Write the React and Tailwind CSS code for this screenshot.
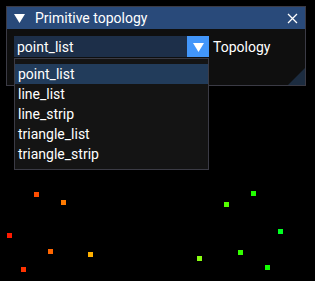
import React from "react";

const points = [
  { x: 34, y: 192, c: "#ff4d00" },
  { x: 61, y: 200, c: "#ff7a00" },
  { x: 7, y: 233, c: "#ff1a00" },
  { x: 48, y: 249, c: "#ff6600" },
  { x: 21, y: 267, c: "#ff3300" },
  { x: 88, y: 252, c: "#ffb000" },
  { x: 251, y: 191, c: "#22ff00" },
  { x: 224, y: 202, c: "#55ff00" },
  { x: 278, y: 229, c: "#00ff22" },
  { x: 238, y: 250, c: "#33ff00" },
  { x: 197, y: 256, c: "#88ff11" },
  { x: 265, y: 265, c: "#11ff00" },
];

const items = ["point_list", "line_list", "line_strip", "triangle_list", "triangle_strip"];

export default function App() {
  return (
    <div className="relative w-[315px] h-[281px] bg-black overflow-hidden font-['Roboto',sans-serif] text-[14px] text-white">
      {points.map((p, i) => (
        <div
          key={i}
          className="absolute w-[5px] h-[5px]"
          style={{ left: p.x, top: p.y, background: p.c }}
        />
      ))}

      <div className="absolute left-[6px] top-[6px] w-[300px] h-[80px] border border-[#3b3b45] bg-[#0f0f0f]">
        <div className="flex items-center h-[22px] bg-[#294a7a]">
          <svg width="11" height="10" viewBox="0 0 11 10" className="ml-[7px]">
            <polygon points="0,1 11,1 5.5,10" fill="#fff" />
          </svg>
          <span className="ml-[10px] leading-none">Primitive topology</span>
          <svg width="11" height="11" viewBox="0 0 11 11" className="ml-auto mr-[7px]">
            <path d="M1 1 L10 10 M10 1 L1 10" stroke="#fff" strokeWidth="1.3" />
          </svg>
        </div>
        <div className="flex items-center mt-[7px] ml-[7px]">
          <div className="flex items-center w-[173px] h-[21px] bg-[#1d2f49] pl-[3px] leading-none">
            point_list
          </div>
          <div className="flex items-center justify-center w-[22px] h-[21px] bg-[#4296fa]">
            <svg width="11" height="10" viewBox="0 0 11 10">
              <polygon points="0,1 11,1 5.5,10" fill="#fff" />
            </svg>
          </div>
          <span className="ml-[4px] leading-none">Topology</span>
        </div>
        <svg width="17" height="17" viewBox="0 0 17 17" className="absolute right-0 bottom-0">
          <polygon points="17,0 17,17 0,17" fill="#1c2c40" />
        </svg>
      </div>

      <div className="absolute left-[14px] top-[58px] w-[195px] h-[112px] border border-[#3b3b45] bg-[#141414] pt-[5px]">
        {items.map((it, i) => (
          <div
            key={it}
            className={
              "flex items-center h-[20px] pl-[3px] leading-none" +
              (i === 0 ? " bg-[#223c5b]" : "")
            }
          >
            {it}
          </div>
        ))}
      </div>
    </div>
  );
}
